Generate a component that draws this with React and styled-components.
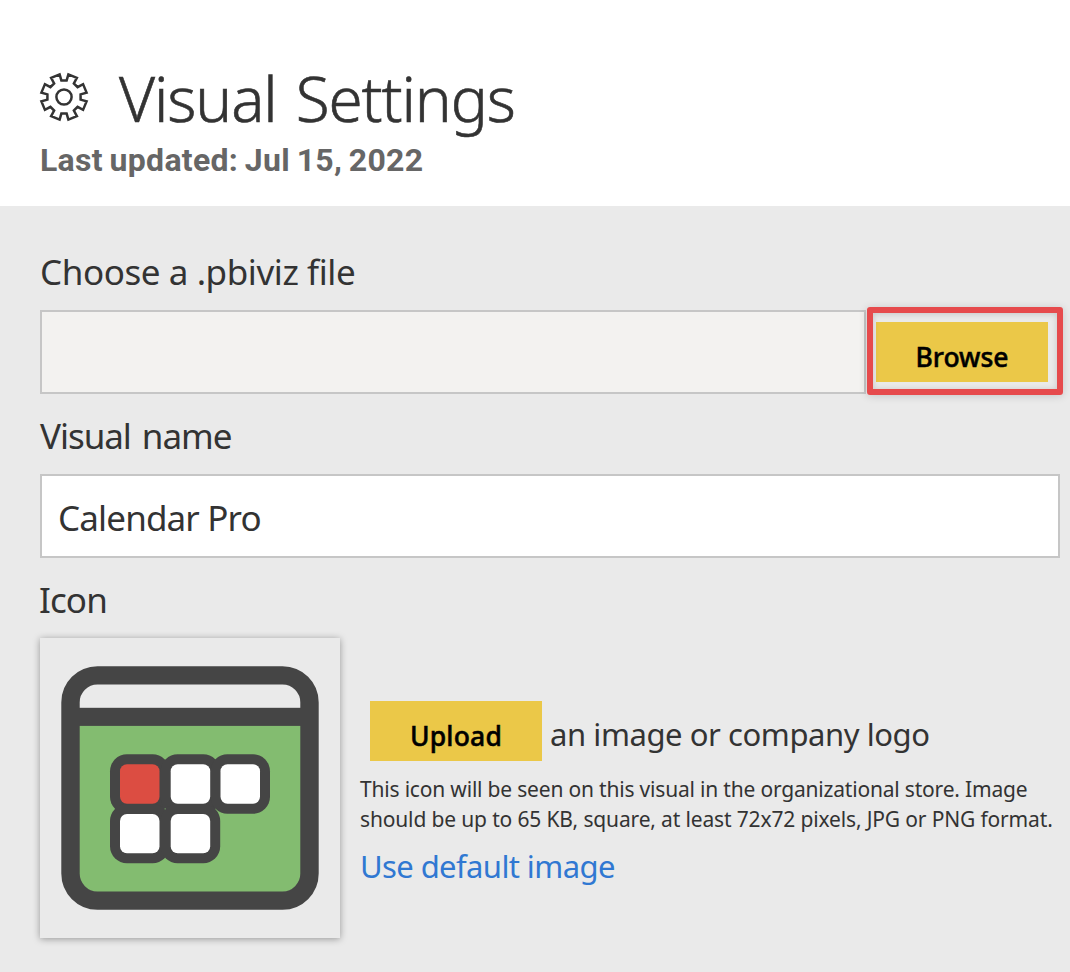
import React from 'react';
import styled, { createGlobalStyle } from 'styled-components';

const GlobalStyle = createGlobalStyle`
  * { box-sizing: border-box; }
  body {
    margin: 0;
    background: #fff;
    color: #333;
    font-family: "Noto Sans", "Open Sans", sans-serif;
  }
`;

const Page = styled.div`
  display: flex;
  flex-direction: column;
  height: 972px;
  overflow: hidden;
`;

const Header = styled.header`
  height: 206px;
  flex: none;
  padding: 57px 40px 0;
`;

const TitleRow = styled.div`
  display: flex;
  align-items: center;
  gap: 31px;
`;

const Title = styled.h1`
  margin: 0;
  padding-top: 2px;
  font-size: 62px;
  font-weight: 300;
  line-height: 78px;
  letter-spacing: -1.1px;
  word-spacing: 4px;
  white-space: nowrap;
  -webkit-text-stroke: 0.6px #333;
`;

const Updated = styled.p`
  margin: 3px 0 0;
  font-family: Roboto, sans-serif;
  font-size: 32px;
  font-weight: 700;
  line-height: 40px;
  letter-spacing: 0.3px;
  word-spacing: -1.6px;
  color: #666;
`;

const Form = styled.main`
  flex: 1;
  display: flex;
  flex-direction: column;
  gap: 17px;
  padding: 41px 10px 0 40px;
  background: #eaeaea;
`;

const Field = styled.section`
  display: flex;
  flex-direction: column;
  gap: 15px;
`;

const Label = styled.label`
  padding-top: 2px;
  font-size: 35px;
  line-height: 46px;
  letter-spacing: ${(p) => p.$tracking}px;
  word-spacing: ${(p) => p.$wordGap || 0}px;
  margin-left: ${(p) => p.$shift || 0}px;
`;

const FileRow = styled.div`
  display: flex;
  align-items: center;
`;

const InputBox = styled.div`
  flex: 1 0 auto;
  height: 84px;
  padding: 4px 16px 0;
  border: 2px solid #c6c6c6;
  background: ${(p) => (p.$readOnly ? '#f3f2f0' : '#fff')};
  font-size: 35px;
  line-height: 76px;
  letter-spacing: -0.85px;
`;

const ButtonFrame = styled.div`
  position: relative;
  margin: 0 12px 0 10px;
`;

const Highlight = styled.span`
  position: absolute;
  top: -15px;
  right: -15px;
  bottom: -13px;
  left: -9px;
  border: 6px solid #e64a4c;
  border-radius: 3px;
  box-shadow: 0 1px 8px rgba(0, 0, 0, 0.16), inset 0 1px 6px rgba(0, 0, 0, 0.16);
  pointer-events: none;
`;

const Button = styled.button`
  display: block;
  width: 172px;
  height: 60px;
  padding: 11px 0 0;
  border: 0;
  background: #ebc848;
  color: #000;
  font-family: inherit;
  font-size: 26.5px;
  font-weight: 500;
  line-height: 49px;
  letter-spacing: ${(p) => p.$tracking || 0}px;
  text-align: center;
  -webkit-text-stroke: 0.5px #000;
`;

const IconRow = styled.div`
  display: flex;
  gap: 20px;
`;

const IconTile = styled.div`
  flex: none;
  width: 300px;
  height: 300px;
  background: #eaeaea;
  box-shadow: 0 1px 7px rgba(0, 0, 0, 0.36);
`;

const Details = styled.div`
  padding-top: 63px;
`;

const UploadRow = styled.div`
  display: flex;
  align-items: baseline;
  gap: 8px;
  height: 60px;
  margin-left: 10px;
`;

const UploadText = styled.span`
  font-size: 31px;
  line-height: 42px;
  letter-spacing: -0.43px;
`;

const Hint = styled.p`
  margin: 13px 0 0;
  font-size: 21px;
  line-height: 30px;
  white-space: nowrap;
`;

const HintLine = styled.span`
  display: block;
  letter-spacing: ${(p) => p.$tracking}px;
`;

const DefaultLink = styled.a`
  display: block;
  margin: 11px 0 0;
  font-size: 31px;
  line-height: 42px;
  letter-spacing: -0.6px;
  color: #3078d2;
`;

const polar = (angle, radius) => {
  const a = (angle * Math.PI) / 180;
  return `${(radius * Math.sin(a)).toFixed(2)},${(-radius * Math.cos(a)).toFixed(2)}`;
};

const gearPoints = Array.from({ length: 8 }, (_, i) => i * 45)
  .flatMap((base) => [
    polar(base - 11, 23),
    polar(base - 9, 16.8),
    polar(base + 9, 16.8),
    polar(base + 11, 23),
  ])
  .join(' ');

function GearIcon() {
  return (
    <svg width="48" height="48" viewBox="-24 -24 48 48" fill="none" stroke="#333" strokeWidth="2.5" overflow="visible">
      <polygon points={gearPoints} />
      <circle r="7.6" />
    </svg>
  );
}

const cells = [
  { x: 80, y: 126.3, fill: '#dc4d42' },
  { x: 130.7, y: 126.3, fill: '#fff' },
  { x: 180.5, y: 126.3, fill: '#fff' },
  { x: 80, y: 175.9, fill: '#fff' },
  { x: 130.7, y: 175.9, fill: '#fff' },
];

function CalendarIcon() {
  return (
    <svg width="300" height="300" viewBox="0 0 300 300">
      <path d="M39 79H261V236a18 18 0 0 1-18 18H57a18 18 0 0 1-18-18Z" fill="#83bc70" />
      <rect x="30.5" y="37.4" width="239" height="225.2" rx="27" fill="none" stroke="#454545" strokeWidth="18.4" />
      <rect x="30" y="69.8" width="240" height="18.1" fill="#454545" />
      {cells.map((c) => (
        <rect key={`b${c.x}-${c.y}`} x={c.x - 10} y={c.y - 10} width="59.5" height="59.4" rx="17" fill="#454545" />
      ))}
      {cells.map((c) => (
        <rect key={`${c.x}-${c.y}`} x={c.x} y={c.y} width="39.5" height="39.4" rx="7" fill={c.fill} />
      ))}
    </svg>
  );
}

export default function App() {
  return (
    <Page>
      <GlobalStyle />
      <Header>
        <TitleRow>
          <GearIcon />
          <Title>Visual Settings</Title>
        </TitleRow>
        <Updated>Last updated: Jul 15, 2022</Updated>
      </Header>
      <Form>
        <Field>
          <Label $tracking={-0.42}>Choose a .pbiviz file</Label>
          <FileRow>
            <InputBox $readOnly />
            <ButtonFrame>
              <Button>Browse</Button>
              <Highlight />
            </ButtonFrame>
          </FileRow>
        </Field>
        <Field>
          <Label $tracking={-1.05} $wordGap={3}>Visual name</Label>
          <InputBox>Calendar Pro</InputBox>
        </Field>
        <Field>
          <Label $tracking={-0.9} $shift={-1}>Icon</Label>
          <IconRow>
            <IconTile>
              <CalendarIcon />
            </IconTile>
            <Details>
              <UploadRow>
                <Button $tracking={0.2}>Upload</Button>
                <UploadText>an image or company logo</UploadText>
              </UploadRow>
              <Hint>
                <HintLine $tracking={-0.19}>This icon will be seen on this visual in the organizational store. Image</HintLine>
                <HintLine $tracking={-0.15}>should be up to 65 KB, square, at least 72x72 pixels, JPG or PNG format.</HintLine>
              </Hint>
              <DefaultLink>Use default image</DefaultLink>
            </Details>
          </IconRow>
        </Field>
      </Form>
    </Page>
  );
}
